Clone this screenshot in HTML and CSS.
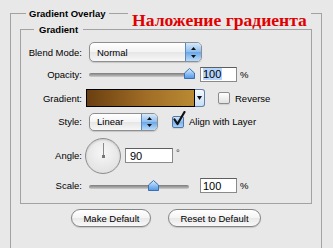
FILE: index.html
```html
<!DOCTYPE html>
<html>
   <head>
      <meta charset="UTF-8">
      <meta name="viewport" content="width=device-width, initial-scale=1.0"/>
      <title>Gradient Overlay</title>
      <link rel="stylesheet" href="styles.css">
   </head>
   <body>
      <div class="panel">
         <fieldset class="group group-outer">
            <legend>Gradient Overlay</legend>

            <fieldset class="group group-inner">
               <legend>Gradient</legend>

               <div class="row row-blend">
                  <span class="label">Blend Mode:</span>
                  <div class="select select-blend">
                     <span class="select-text">Normal</span>
                     <span class="stepper">
                        <svg width="5" height="11" viewBox="0 0 5 11"><path d="M2.5 0 L5 3 H0 Z M0 8 H5 L2.5 11 Z" fill="#111"/></svg>
                     </span>
                  </div>
               </div>

               <div class="row row-opacity">
                  <span class="label">Opacity:</span>
                  <div class="slider">
                     <span class="slider-track"></span>
                     <svg class="slider-thumb" style="left: 100%" width="11" height="11" viewBox="0 0 11 11">
                        <defs>
                           <linearGradient id="thumb-a" x1="0" y1="0" x2="0" y2="1">
                              <stop offset="0" stop-color="#d8ebff"/>
                              <stop offset="1" stop-color="#4f97e6"/>
                           </linearGradient>
                        </defs>
                        <path d="M5.5 0.5 L10.5 5 V10.5 H0.5 V5 Z" fill="url(#thumb-a)" stroke="#3d6fae"/>
                     </svg>
                  </div>
                  <span class="field field-short"><span class="field-selected">100</span></span>
                  <span class="unit">%</span>
               </div>

               <div class="row row-gradient">
                  <span class="label">Gradient:</span>
                  <div class="swatch"></div>
                  <div class="swatch-arrow">
                     <svg width="5" height="4" viewBox="0 0 5 4"><path d="M0 0 H5 L2.5 4 Z" fill="#111"/></svg>
                  </div>
                  <span class="checkbox checkbox-reverse"></span>
                  <span class="check-label">Reverse</span>
               </div>

               <div class="row row-style">
                  <span class="label">Style:</span>
                  <div class="select select-style">
                     <span class="select-text">Linear</span>
                     <span class="stepper">
                        <svg width="5" height="10" viewBox="0 0 5 10"><path d="M2.5 0 L5 3 H0 Z M0 7 H5 L2.5 10 Z" fill="#111"/></svg>
                     </span>
                  </div>
                  <span class="checkbox checkbox-align checked">
                     <svg class="checkmark" width="15" height="16" viewBox="0 0 15 16"><path d="M2.5 8.5 L5.5 13 L12.5 1" fill="none" stroke="#111" stroke-width="2.2" stroke-linecap="round" stroke-linejoin="round"/></svg>
                  </span>
                  <span class="check-label">Align with Layer</span>
               </div>

               <div class="row row-angle">
                  <span class="label">Angle:</span>
                  <div class="dial">
                     <span class="dial-hand"></span>
                     <span class="dial-center"></span>
                  </div>
                  <span class="field field-angle">90</span>
                  <span class="degree">&deg;</span>
               </div>

               <div class="row row-scale">
                  <span class="label">Scale:</span>
                  <div class="slider">
                     <span class="slider-track"></span>
                     <svg class="slider-thumb" style="left: 64%" width="11" height="11" viewBox="0 0 11 11">
                        <defs>
                           <linearGradient id="thumb-b" x1="0" y1="0" x2="0" y2="1">
                              <stop offset="0" stop-color="#d8ebff"/>
                              <stop offset="1" stop-color="#4f97e6"/>
                           </linearGradient>
                        </defs>
                        <path d="M5.5 0.5 L10.5 5 V10.5 H0.5 V5 Z" fill="url(#thumb-b)" stroke="#3d6fae"/>
                     </svg>
                  </div>
                  <span class="field field-short">100</span>
                  <span class="unit">%</span>
               </div>
            </fieldset>

            <div class="buttons">
               <button class="button">Make Default</button>
               <button class="button">Reset to Default</button>
            </div>
         </fieldset>

         <div class="caption">Наложение градиента</div>
      </div>
   </body>
</html>
```

FILE: styles.css
```css
*
{
   box-sizing: border-box;
}

body
{
   margin: 0;
   background: #e8e8e8;
   font-family: "Liberation Sans", Arial, sans-serif;
   font-size: 9.5px;
   color: #000;
}

.panel
{
   position: relative;
   height: 248px;
   overflow: hidden;
}

/* group boxes */

.group
{
   margin: 0;
   padding: 0;
   min-width: 0;
   border: 1px solid #a2a2a2;
}

.group > legend
{
   font-weight: bold;
   line-height: 13px;
}

.group-outer
{
   margin: 7px 11px 0 10px;
   height: 260px;
}

.group-outer > legend
{
   margin-left: 15px;
   padding: 0 3px;
}

.group-inner
{
   margin: 3px 9px 0 9px;
   padding: 6px 0 10px;
}

.group-inner > legend
{
   margin-left: 13px;
   padding: 0 5px;
}

/* rows */

.row
{
   display: flex;
   align-items: center;
}

.row-blend { height: 20px; }
.row-opacity { height: 24px; }
.row-gradient { height: 24px; }
.row-style { height: 23px; }
.row-angle { height: 45px; }
.row-scale { height: 15px; }

.label
{
   flex: none;
   width: 61px;
   text-align: right;
}

/* popup selects */

.select
{
   display: flex;
   margin-left: 7px;
   border: 1px solid #8f8f8f;
   border-radius: 5px;
   background: linear-gradient(#ffffff, #f3f3f3 50%, #e6e6e6 51%, #f7f7f7);
   box-shadow: 0 1px 1px rgba(0, 0, 0, 0.15);
   overflow: hidden;
}

.select-blend
{
   width: 113px;
   height: 20px;
}

.select-style
{
   width: 69px;
   height: 18px;
}

.select-text
{
   flex: 1;
   padding-left: 7px;
   align-self: center;
}

.stepper
{
   display: flex;
   align-items: center;
   justify-content: center;
   width: 16px;
   border-left: 1px solid #5d87bd;
   background: linear-gradient(#d6e8fb, #8dbdee 50%, #6aa6e8 51%, #b9dcfb);
}

/* sliders */

.slider
{
   position: relative;
   flex: none;
   width: 100px;
   height: 12px;
   margin-left: 7px;
}

.slider-track
{
   display: block;
   margin-top: 5px;
   height: 4px;
   border-radius: 2px;
   background: linear-gradient(#7c7c7c, #a8a8a8 60%, #cfcfcf);
}

.slider-thumb
{
   position: absolute;
   top: 0;
   margin-left: -5.5px;
}

/* text fields */

.field
{
   display: flex;
   align-items: center;
   flex: none;
   height: 15px;
   padding-left: 2px;
   border: 1px solid #8a8a8a;
   border-top-color: #5e5e5e;
   background: #fff;
   font-size: 11px;
}

.field-short
{
   width: 37px;
   margin-left: 11px;
}

.field-angle
{
   width: 48px;
   margin-left: 4px;
   padding-left: 4px;
}

.field-selected
{
   background: #b5d5fd;
   padding-right: 1px;
}

.unit
{
   margin-left: 3px;
}

.degree
{
   margin: 0 0 6px 3px;
   color: #333;
}

/* gradient swatch */

.swatch
{
   width: 109px;
   height: 18px;
   margin-left: 4px;
   border: 1px solid #000;
   background: linear-gradient(to right, #6a3f10, #a06d26 55%, #b98a33);
}

.swatch-arrow
{
   display: flex;
   align-items: center;
   justify-content: center;
   width: 10px;
   height: 18px;
   border: 1px solid #5f7fa8;
   border-left: none;
   border-radius: 0 3px 3px 0;
   background: linear-gradient(#f4f9ff, #c8def5);
}

/* checkboxes */

.checkbox
{
   position: relative;
   flex: none;
   width: 12px;
   height: 12px;
   border: 1px solid #8c8c8c;
   border-radius: 2px;
   background: linear-gradient(#ffffff, #e2e2e2);
   box-shadow: 0 1px 1px rgba(0, 0, 0, 0.1);
}

.checkbox.checked
{
   border-color: #4f77a8;
   background: linear-gradient(#d2e6fb, #80b5ec 55%, #a9d2f8);
}

.checkbox-reverse
{
   margin-left: 13px;
}

.checkbox-align
{
   margin-left: 14px;
}

.checkmark
{
   position: absolute;
   left: -1px;
   top: -6px;
}

.check-label
{
   margin-left: 5px;
}

/* angle dial */

.dial
{
   position: relative;
   flex: none;
   width: 36px;
   height: 36px;
   margin-left: 3px;
   border: 1px solid #8d8d8d;
   border-radius: 50%;
   background: radial-gradient(circle at 50% 40%, #f7f7f7, #e4e4e4 70%, #d2d2d2);
   box-shadow: inset 0 1px 2px rgba(0, 0, 0, 0.15);
}

.dial-hand
{
   position: absolute;
   left: 17px;
   top: 4px;
   width: 1px;
   height: 14px;
   background: #8a8a8a;
}

.dial-center
{
   position: absolute;
   left: 16px;
   top: 16px;
   width: 3px;
   height: 3px;
   background: #777;
}

/* buttons */

.buttons
{
   display: flex;
   justify-content: center;
   gap: 17px;
   margin-top: 5px;
}

.button
{
   height: 18px;
   padding: 0 11px;
   border: 1px solid #858585;
   border-radius: 9px;
   background: linear-gradient(#ffffff, #f4f4f4 50%, #e8e8e8 51%, #f9f9f9);
   box-shadow: 0 1px 1px rgba(0, 0, 0, 0.15);
   font-family: "Liberation Sans", Arial, sans-serif;
   font-size: 9.5px;
   color: #000;
}

/* red title over the frame */

.caption
{
   position: absolute;
   left: 128px;
   top: 11px;
   padding: 0 4px;
   line-height: 18px;
   white-space: nowrap;
   background: #e8e8e8;
   color: #e00000;
   font-family: "Liberation Serif", "Times New Roman", serif;
   font-size: 17.6px;
   font-weight: bold;
}
```
